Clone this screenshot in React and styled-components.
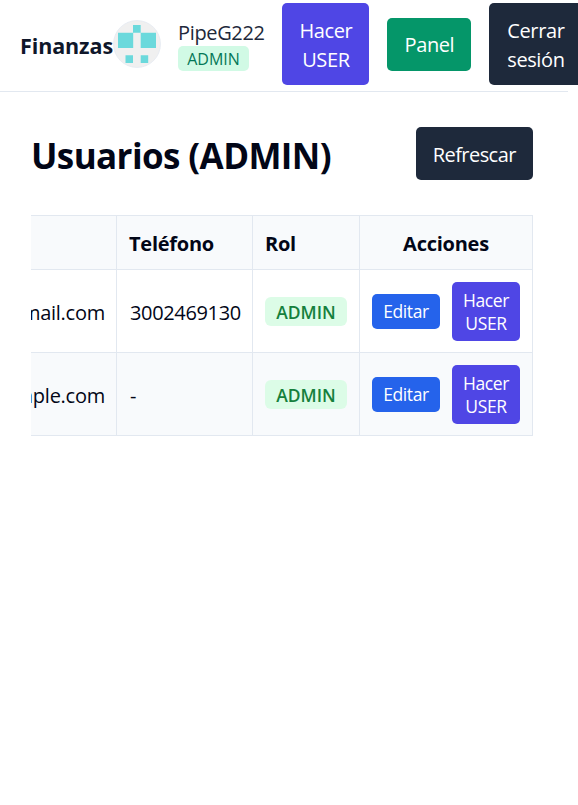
import React from "react";
import styled, { createGlobalStyle } from "styled-components";

const GlobalStyle = createGlobalStyle`
  * { box-sizing: border-box; }
  html, body { margin: 0; background: #fff; overflow: hidden; }
  body {
    font-family: "Segoe UI", "Open Sans", "Noto Sans", sans-serif;
    font-size: 20px;
    line-height: 29px;
    color: #020617;
  }
`;

const Page = styled.div`
  width: 578px;
  height: 805px;
  overflow: hidden;
`;

const Header = styled.header`
  width: 568px;
  height: 92px;
  padding: 0 0 3px 20px;
  border-bottom: 1px solid #e2e8f0;
  display: flex;
  align-items: center;
`;

const Brand = styled.div`
  flex: 0 0 93px;
  padding-top: 2px;
  font-size: 21.5px;
  font-weight: 700;
  letter-spacing: -0.1px;
  color: #0f172a;
  white-space: nowrap;
`;

const Avatar = styled.svg`
  flex: none;
  width: 48px;
  height: 48px;
  margin-right: 17px;
`;

const Account = styled.div`
  flex: 0 0 104.4px;
  height: 53px;
  margin-top: 2px;
  display: flex;
  flex-direction: column;
  align-items: flex-start;
`;

const UserName = styled.span`
  line-height: 27px;
  letter-spacing: -0.35px;
  color: #1e293b;
`;

const AccountRole = styled.span`
  width: 71px;
  height: 25px;
  border-radius: 5px;
  background: #d1fae5;
  color: #047857;
  font-size: 16px;
  line-height: 26px;
  text-align: center;
`;

const Button = styled.button`
  flex: none;
  width: ${(p) => p.$width}px;
  height: ${(p) => p.$height || 53}px;
  padding: 1px 0 0;
  border: 0;
  border-radius: 5px;
  background: ${(p) => p.$color};
  color: #fff;
  font: inherit;
  line-height: 29px;
  letter-spacing: ${(p) => p.$spacing || -0.4}px;
  & + & { margin-left: 18px; }
`;

const Main = styled.main`
  padding: 35px 45px 0 31px;
`;

const TitleBar = styled.div`
  display: flex;
  align-items: center;
  justify-content: space-between;
  margin-bottom: 35px;
`;

const Title = styled.h1`
  margin: 0;
  padding-top: 4px;
  font-size: 35px;
  line-height: 44px;
  font-weight: 700;
  letter-spacing: -0.6px;
  white-space: nowrap;
`;

const TableViewport = styled.div`
  width: 502px;
  display: flex;
  justify-content: flex-end;
  overflow: hidden;
`;

const Table = styled.table`
  flex: none;
  width: 646px;
  table-layout: fixed;
  border-spacing: 0;
  border-top: 1px solid #e2e8f0;
`;

const Col = styled.col`
  width: ${(p) => p.$width}px;
`;

const Row = styled.tr`
  height: 83px;
  background: ${(p) => (p.$striped ? "#f8fafc" : "#fff")};
`;

const HeadRow = styled(Row)`
  height: 54px;
`;

const Cell = styled.td`
  padding: 0 12px;
  border-right: 1px solid #e2e8f0;
  border-bottom: 1px solid #e2e8f0;
  text-align: ${(p) => p.$align || "left"};
  letter-spacing: ${(p) => p.$spacing || 0}px;
  white-space: nowrap;
`;

const TextCell = styled(Cell)`
  padding: 2px 11px 0 13px;
`;

const HeadCell = styled(Cell).attrs({ as: "th" })`
  padding-top: 1px;
  font-weight: 700;
  letter-spacing: -0.25px;
`;

const RoleBadge = styled.span`
  display: block;
  width: 82px;
  height: 29px;
  border-radius: 6px;
  background: #dcfce7;
  color: #15803d;
  font-size: 17.5px;
  line-height: 30px;
  font-weight: 600;
  text-align: center;
`;

const Actions = styled.div`
  display: flex;
  align-items: center;
  gap: 12px;
`;

const SmallButton = styled(Button)`
  font-size: 17.5px;
  line-height: 23px;
  white-space: normal;
  & + & { margin-left: 0; }
`;

const users = [
  { email: "pipeg222@gmail.com", phone: "3002469130", role: "ADMIN" },
  { email: "admin@example.com", phone: "-", role: "ADMIN" },
];

export default function App() {
  return (
    <Page>
      <GlobalStyle />
      <Header>
        <Brand>Finanzas</Brand>
        <Avatar viewBox="0 0 48 48">
          <circle cx="24" cy="24" r="23.5" fill="#f0f0f0" stroke="#e2e8f0" strokeWidth="0.7" />
          <path
            fill="#6bd9dc"
            d="M20 5h7.7v7.7H20zM5 12.7h15.2V28H5zM27.7 12.7H43V28H27.7zM12.5 35.3h7.5V43h-7.5zM27.7 35.3h7.5V43h-7.5z"
          />
        </Avatar>
        <Account>
          <UserName>PipeG222</UserName>
          <AccountRole>ADMIN</AccountRole>
        </Account>
        <Button $width={87} $height={82} $color="#4f46e5">
          Hacer<br />USER
        </Button>
        <Button $width={84} $color="#059669">Panel</Button>
        <Button $width={93} $height={82} $color="#1e293b">
          Cerrar<br />sesión
        </Button>
      </Header>
      <Main>
        <TitleBar>
          <Title>Usuarios (ADMIN)</Title>
          <Button $width={117.5} $spacing={-0.55} $color="#1e293b">Refrescar</Button>
        </TitleBar>
        <TableViewport>
          <Table>
            <colgroup>
              <Col $width={230} />
              <Col $width={136} />
              <Col $width={107} />
              <Col $width={173} />
            </colgroup>
            <thead>
              <HeadRow $striped>
                <HeadCell>Email</HeadCell>
                <HeadCell>Teléfono</HeadCell>
                <HeadCell>Rol</HeadCell>
                <HeadCell $align="center">Acciones</HeadCell>
              </HeadRow>
            </thead>
            <tbody>
              {users.map((user, i) => (
                <Row key={user.email} $striped={i % 2 === 1}>
                  <TextCell $align="right" $spacing={-0.25}>{user.email}</TextCell>
                  <TextCell $spacing={-0.35}>{user.phone}</TextCell>
                  <Cell>
                    <RoleBadge>{user.role}</RoleBadge>
                  </Cell>
                  <Cell>
                    <Actions>
                      <SmallButton $width={68} $height={35} $color="#2563eb">Editar</SmallButton>
                      <SmallButton $width={68} $height={59} $color="#4f46e5">
                        Hacer<br />USER
                      </SmallButton>
                    </Actions>
                  </Cell>
                </Row>
              ))}
            </tbody>
          </Table>
        </TableViewport>
      </Main>
    </Page>
  );
}
